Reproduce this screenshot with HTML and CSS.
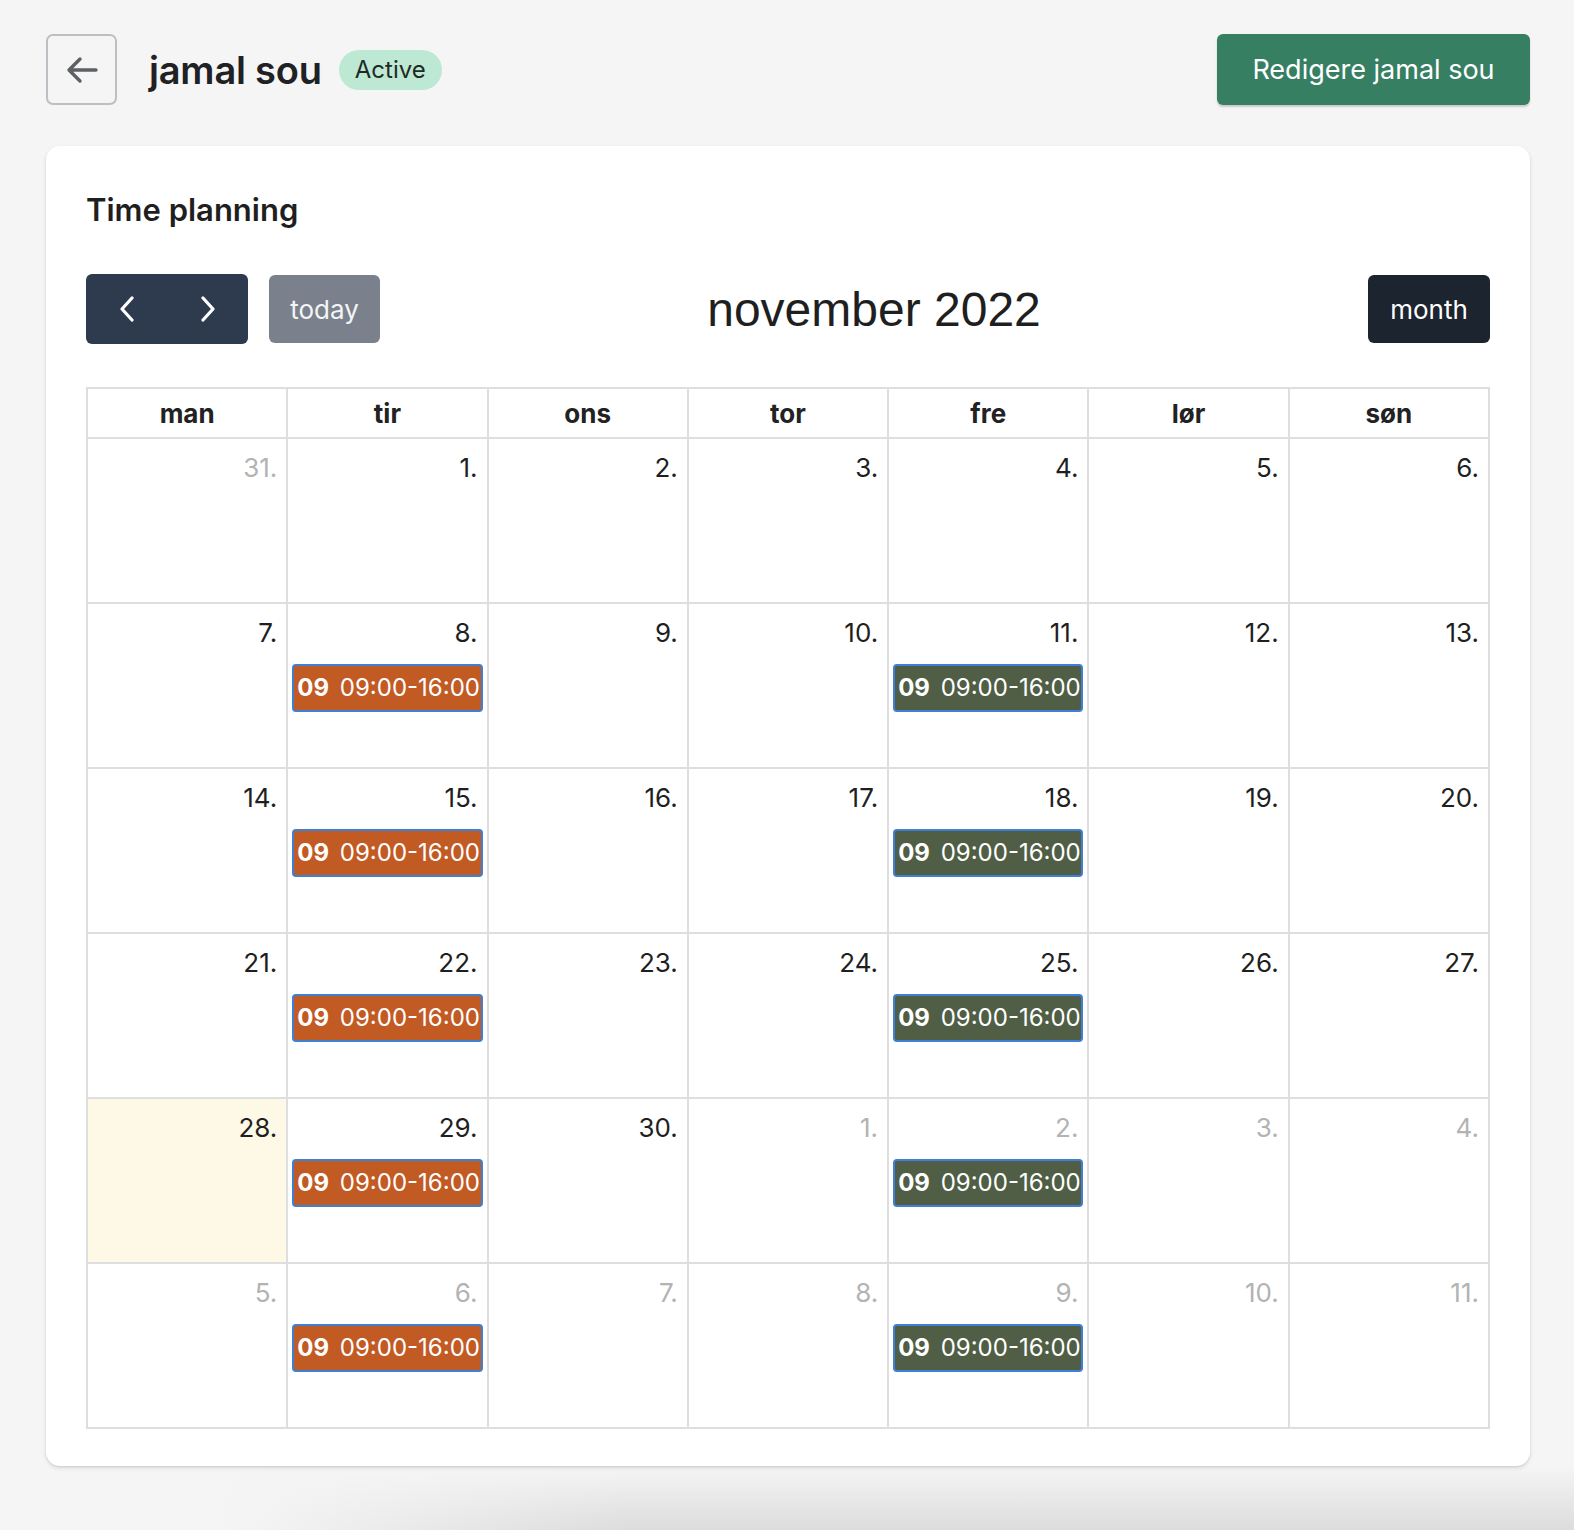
FILE: index.html
```html
<!DOCTYPE html>
<html lang="no">
<head>
<meta charset="utf-8">
<title>jamal sou</title>
<link rel="stylesheet" href="styles.css">
</head>
<body>
<div class="page">
  <header class="top">
    <div class="top-left">
      <button class="back" aria-label="Back">
        <svg width="34" height="28" viewBox="0 0 34 28"><path d="M31 14H4M15 3L4 14l11 11" fill="none" stroke="#5d6166" stroke-width="3.4" stroke-linecap="round" stroke-linejoin="round"/></svg>
      </button>
      <h1 class="name">jamal sou</h1>
      <span class="badge">Active</span>
    </div>
    <button class="edit">Redigere jamal sou</button>
  </header>

  <section class="card">
    <h2 class="card-title">Time planning</h2>
    <div class="toolbar">
      <div class="tb-left">
        <div class="nav-group">
          <button class="nav-btn" aria-label="prev"><svg width="16" height="26" viewBox="0 0 16 26"><path d="M13 2L3 13l10 11" fill="none" stroke="#fff" stroke-width="3.2" stroke-linecap="round" stroke-linejoin="round"/></svg></button>
          <button class="nav-btn" aria-label="next"><svg width="16" height="26" viewBox="0 0 16 26"><path d="M3 2l10 11L3 24" fill="none" stroke="#fff" stroke-width="3.2" stroke-linecap="round" stroke-linejoin="round"/></svg></button>
        </div>
        <button class="today">today</button>
      </div>
      <div class="month-title">november 2022</div>
      <button class="month">month</button>
    </div>

    <table class="cal">
      <thead>
        <tr><th>man</th><th>tir</th><th>ons</th><th>tor</th><th>fre</th><th>lør</th><th>søn</th></tr>
      </thead>
      <tbody>
        <tr>
          <td class="other"><div class="num">31.</div></td>
          <td><div class="num">1.</div></td>
          <td><div class="num">2.</div></td>
          <td><div class="num">3.</div></td>
          <td><div class="num">4.</div></td>
          <td><div class="num">5.</div></td>
          <td><div class="num">6.</div></td>
        </tr>
        <tr>
          <td><div class="num">7.</div></td>
          <td><div class="num">8.</div><div class="ev orange"><b>09</b> 09:00-16:00</div></td>
          <td><div class="num">9.</div></td>
          <td><div class="num">10.</div></td>
          <td><div class="num">11.</div><div class="ev green"><b>09</b> 09:00-16:00</div></td>
          <td><div class="num">12.</div></td>
          <td><div class="num">13.</div></td>
        </tr>
        <tr>
          <td><div class="num">14.</div></td>
          <td><div class="num">15.</div><div class="ev orange"><b>09</b> 09:00-16:00</div></td>
          <td><div class="num">16.</div></td>
          <td><div class="num">17.</div></td>
          <td><div class="num">18.</div><div class="ev green"><b>09</b> 09:00-16:00</div></td>
          <td><div class="num">19.</div></td>
          <td><div class="num">20.</div></td>
        </tr>
        <tr>
          <td><div class="num">21.</div></td>
          <td><div class="num">22.</div><div class="ev orange"><b>09</b> 09:00-16:00</div></td>
          <td><div class="num">23.</div></td>
          <td><div class="num">24.</div></td>
          <td><div class="num">25.</div><div class="ev green"><b>09</b> 09:00-16:00</div></td>
          <td><div class="num">26.</div></td>
          <td><div class="num">27.</div></td>
        </tr>
        <tr>
          <td class="today-cell"><div class="num">28.</div></td>
          <td><div class="num">29.</div><div class="ev orange"><b>09</b> 09:00-16:00</div></td>
          <td><div class="num">30.</div></td>
          <td class="other"><div class="num">1.</div></td>
          <td class="other"><div class="num">2.</div><div class="ev green"><b>09</b> 09:00-16:00</div></td>
          <td class="other"><div class="num">3.</div></td>
          <td class="other"><div class="num">4.</div></td>
        </tr>
        <tr>
          <td class="other"><div class="num">5.</div></td>
          <td class="other"><div class="num">6.</div><div class="ev orange"><b>09</b> 09:00-16:00</div></td>
          <td class="other"><div class="num">7.</div></td>
          <td class="other"><div class="num">8.</div></td>
          <td class="other"><div class="num">9.</div><div class="ev green"><b>09</b> 09:00-16:00</div></td>
          <td class="other"><div class="num">10.</div></td>
          <td class="other"><div class="num">11.</div></td>
        </tr>
      </tbody>
    </table>
  </section>
</div>
</body>
</html>
```

FILE: styles.css
```css
html, body {
  margin: 0;
  padding: 0;
}
body {
  background-color: #f5f5f5;
  background-image:
    linear-gradient(to right, #f5f5f5 14%, rgba(245,245,245,0) 40%),
    linear-gradient(to bottom, rgba(0,0,0,0) 0, rgba(0,0,0,0.1) 100%);
  background-repeat: no-repeat;
  background-size: 100% 64px, 100% 64px;
  background-position: 0 100%, 0 100%;
  height: 1530px;
  overflow: hidden;
  font-family: Inter, "Noto Sans", sans-serif;
  color: #222;
}
.page {
  padding: 34px 44px 0 46px;
}
.top {
  display: flex;
  justify-content: space-between;
  align-items: center;
  height: 71px;
}
.top-left {
  display: flex;
  align-items: center;
}
button {
  font-family: inherit;
  cursor: pointer;
}
.back {
  width: 71px;
  height: 71px;
  box-sizing: border-box;
  border: 2px solid #bcc0c5;
  border-radius: 7px;
  background: transparent;
  display: flex;
  align-items: center;
  justify-content: center;
  padding: 0;
  margin-right: 32px;
}
.name {
  margin: 0;
  font-size: 38px;
  font-weight: 600;
  color: #202124;
  letter-spacing: -0.2px;
  margin-right: 17px;
}
.badge {
  display: inline-flex;
  align-items: center;
  height: 40px;
  padding: 0 16px;
  border-radius: 20px;
  background: #bde8d4;
  color: #1e2a24;
  font-size: 24px;
}
.edit {
  width: 313px;
  height: 71px;
  border: none;
  border-radius: 6px;
  background: #367f63;
  box-shadow: 0 2px 2px rgba(0,0,0,0.18);
  color: #fff;
  font-size: 27px;
  padding: 0;
}
.card {
  margin-top: 41px;
  background: #fff;
  border-radius: 14px;
  box-shadow: 0 2px 4px rgba(0,0,0,0.12), 0 1px 2px rgba(0,0,0,0.06);
  padding: 39px 40px 40px;
  height: 1320px;
  box-sizing: border-box;
}
.card-title {
  margin: 0;
  font-size: 31px;
  font-weight: 600;
  line-height: 50px;
  color: #1f1f1f;
}
.toolbar {
  margin-top: 39px;
  display: flex;
  justify-content: space-between;
  align-items: center;
  height: 70px;
}
.tb-left {
  display: flex;
  align-items: center;
}
.nav-group {
  display: flex;
  background: #2e3b4e;
  border-radius: 6px;
  height: 70px;
}
.nav-btn {
  width: 81px;
  height: 70px;
  background: transparent;
  border: none;
  padding: 0;
  display: flex;
  align-items: center;
  justify-content: center;
}
.today {
  margin-left: 21px;
  width: 111px;
  height: 68px;
  border: none;
  border-radius: 6px;
  background: #7a818c;
  color: #f3f4f6;
  font-size: 26px;
  padding: 0;
}
.month-title {
  font-family: "Liberation Sans", Arial, sans-serif;
  font-size: 48px;
  color: #1f1f1f;
}
.month {
  width: 122px;
  height: 68px;
  border: none;
  border-radius: 6px;
  background: #1c2430;
  color: #fff;
  font-size: 26px;
  padding: 0;
}
.cal {
  margin-top: 43px;
  width: 1404px;
  border-collapse: collapse;
  table-layout: fixed;
  border: 2px solid #dedede;
}
.cal th, .cal td {
  border: 2px solid #dedede;
  padding: 0;
}
.cal th {
  height: 48px;
  font-size: 26px;
  font-weight: 700;
  color: #222;
  text-align: center;
}
.cal td {
  height: 163px;
  vertical-align: top;
}
.num {
  text-align: right;
  font-size: 26px;
  line-height: 32px;
  padding: 13px 9px 0 0;
  color: #1f1f1f;
}
.other .num {
  color: #b3b3b3;
}
.today-cell {
  background: #fdf9e6;
}
.ev {
  margin: 15px 4px 0 4px;
  height: 48px;
  box-sizing: border-box;
  border: 2px solid #3f7fd6;
  border-radius: 4px;
  color: #fff;
  font-size: 24px;
  line-height: 44px;
  padding-left: 3px;
  white-space: nowrap;
  overflow: hidden;
}
.ev b {
  font-weight: 700;
  margin-right: 4px;
}
.ev.orange { background: #c25a24; }
.ev.green { background: #4f5e45; }
```
